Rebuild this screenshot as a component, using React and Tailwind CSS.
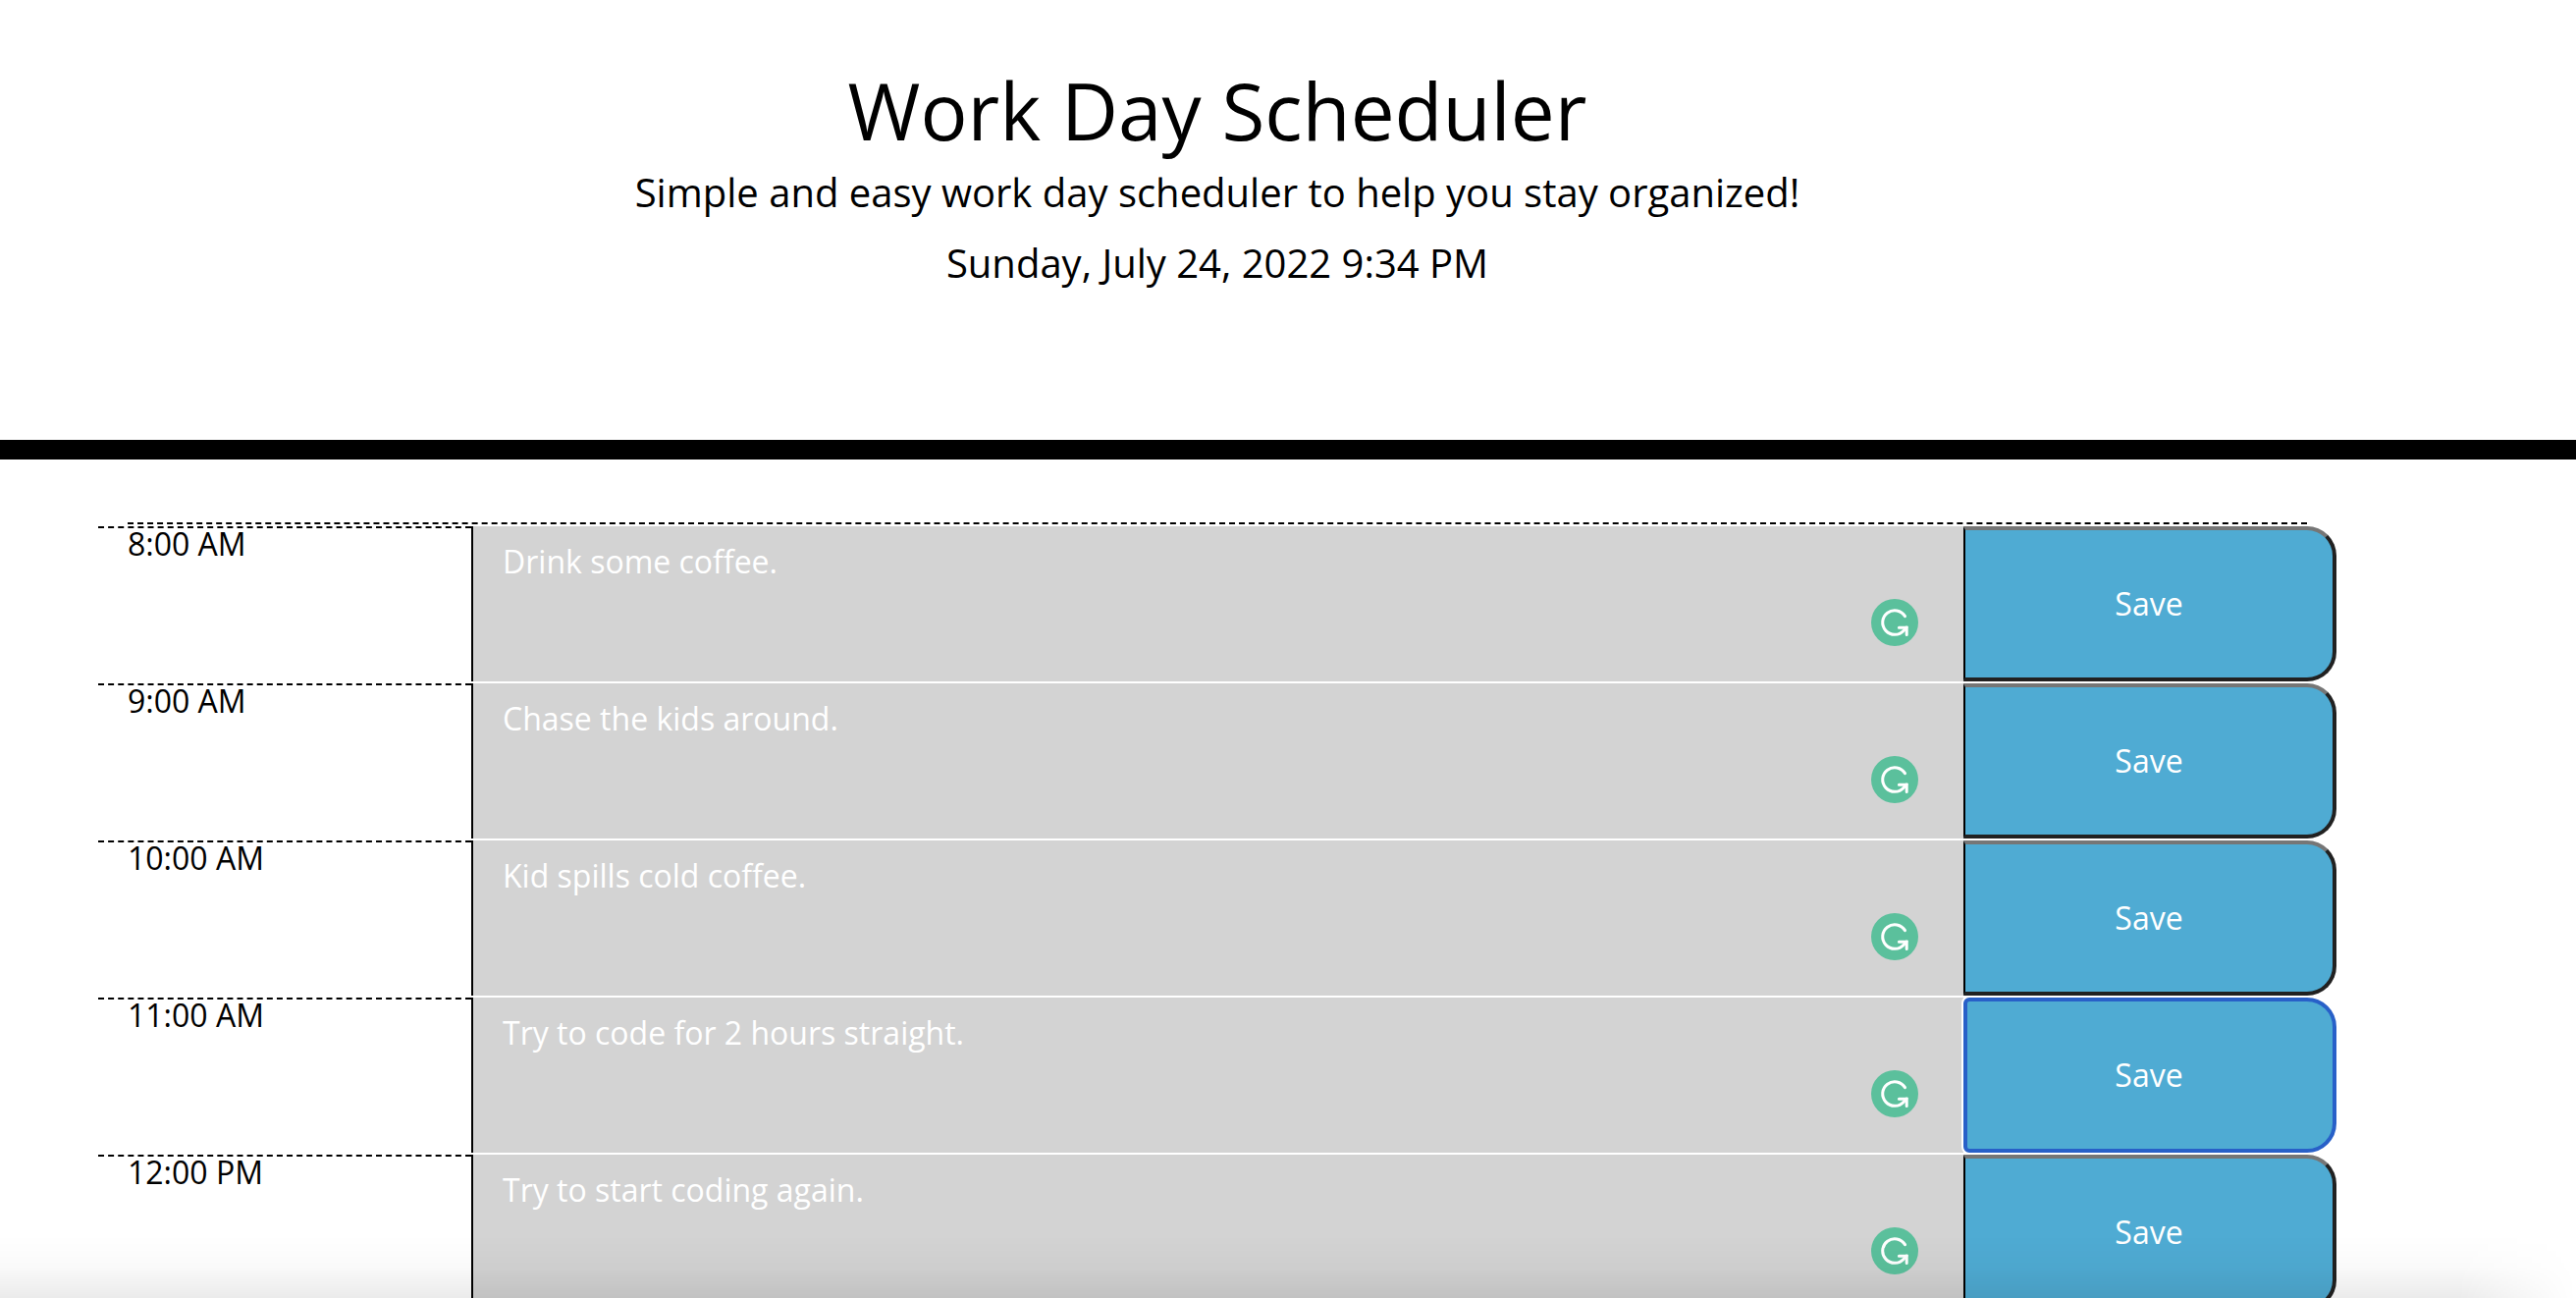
const slots = [
  { time: '8:00 AM', task: 'Drink some coffee.' },
  { time: '9:00 AM', task: 'Chase the kids around.' },
  { time: '10:00 AM', task: 'Kid spills cold coffee.' },
  { time: '11:00 AM', task: 'Try to code for 2 hours straight.', focused: true },
  { time: '12:00 PM', task: 'Try to start coding again.' },
];

function AssistantBadge() {
  return (
    <svg
      aria-hidden="true"
      viewBox="0 0 48 48"
      fill="none"
      className="pointer-events-none absolute right-[46px] bottom-9 size-12"
    >
      <circle cx="24" cy="24" r="24" fill="#5bc09c" />
      <path
        d="M34.5 17.6A12.3 12.3 0 1 0 33.2 32.2L36 29"
        stroke="#fff"
        strokeWidth="3"
        strokeLinecap="round"
      />
      <path d="M28.4 29.2H36.2V36.6" stroke="#fff" strokeWidth="3" strokeLinecap="round" />
    </svg>
  );
}

function TimeBlock({ time, task, focused }) {
  const id = 'task-' + time.replace(/[^0-9A-Z]/g, '');
  return (
    <div className="grid h-[158px] grid-cols-12">
      <label
        htmlFor={id}
        className="col-span-2 border-t-2 border-dashed border-black pl-[30px] text-[32px] leading-8"
      >
        {time}
      </label>
      <div className="relative col-span-8">
        <textarea
          id={id}
          defaultValue={task}
          spellCheck={false}
          className="block size-full resize-none overflow-hidden border-l-2 border-black bg-[#d3d3d3] px-[30px] py-3 text-[32px] leading-12 text-white outline-none"
        />
        <AssistantBadge />
      </div>
      <button
        type="button"
        className={
          focused
            ? 'relative col-span-2 rounded-l-md rounded-r-[30px] border-4 border-[#2860c8] bg-[#4fabd3] pr-0.5 text-[32px] text-white ring-2 ring-white'
            : 'col-span-2 rounded-r-[30px] border-4 border-l-2 border-t-[#767676] border-r-[#212121] border-b-[#212121] border-l-black bg-[#4fabd3] text-[32px] text-white'
        }
      >
        Save
      </button>
    </div>
  );
}

export default function App() {
  return (
    <div className="relative h-screen overflow-hidden bg-white font-['Open_Sans',sans-serif] text-black">
      <header className="border-b-[20px] border-black pt-16 pr-[244px] pb-[150px] pl-[100px] text-center">
        <h1 className="text-[80px] leading-24">Work Day Scheduler</h1>
        <p className="mt-1.5 text-[40px] leading-15">
          Simple and easy work day scheduler to help you stay organized!
        </p>
        <p className="mt-3 text-[40px] leading-15">Sunday, July 24, 2022 9:34 PM</p>
      </header>
      <main className="mt-16 mr-[244px] ml-[100px]">
        <div className="mx-[30px] mb-0.5 border-t-2 border-dashed border-black" />
        <div className="flex flex-col gap-0.5">
          {slots.map((slot) => (
            <TimeBlock key={slot.time} {...slot} />
          ))}
        </div>
      </main>
      <div className="pointer-events-none absolute inset-x-0 bottom-0 h-16 bg-linear-to-b from-transparent via-black/2 to-black/8 mask-r-from-[calc(100%-120px)] mask-r-to-100%" />
    </div>
  );
}
